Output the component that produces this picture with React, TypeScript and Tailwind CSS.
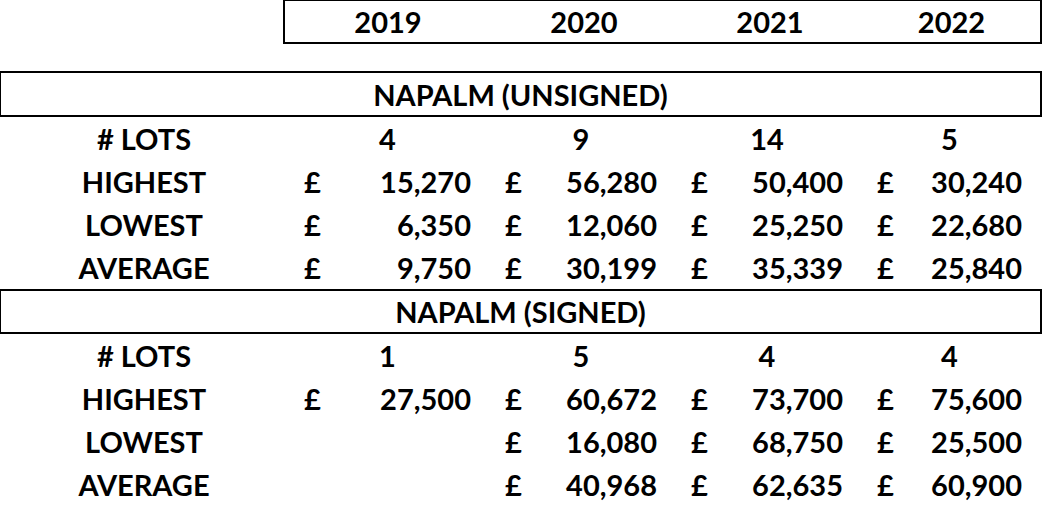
type Row = {
  label: string;
  values: (string | null)[];
  money: boolean;
};

const cols = 'grid grid-cols-[288px_201px_186px_186px_179px]';

const unsigned: Row[] = [
  { label: '# LOTS', values: ['4', '9', '14', '5'], money: false },
  { label: 'HIGHEST', values: ['15,270', '56,280', '50,400', '30,240'], money: true },
  { label: 'LOWEST', values: ['6,350', '12,060', '25,250', '22,680'], money: true },
  { label: 'AVERAGE', values: ['9,750', '30,199', '35,339', '25,840'], money: true },
];

const signed: Row[] = [
  { label: '# LOTS', values: ['1', '5', '4', '4'], money: false },
  { label: 'HIGHEST', values: ['27,500', '60,672', '73,700', '75,600'], money: true },
  { label: 'LOWEST', values: [null, '16,080', '68,750', '25,500'], money: true },
  { label: 'AVERAGE', values: [null, '40,968', '62,635', '60,900'], money: true },
];

function DataRow({ row }: { row: Row }) {
  return (
    <div className={`${cols} h-[43px] items-center`}>
      <div className="text-center">{row.label}</div>
      {row.values.map((v, i) => (
        <div key={i} className="flex justify-between pl-[16px] pr-[18px]">
          {row.money ? (
            v && (
              <>
                <span>£</span>
                <span>{v}</span>
              </>
            )
          ) : (
            <span className="w-full pr-0 text-center">{v}</span>
          )}
        </div>
      ))}
    </div>
  );
}

function Section({ title, rows, boxH }: { title: string; rows: Row[]; boxH: string }) {
  return (
    <>
      <div
        className={`flex w-[1042px] items-center justify-center border-y-2 border-r-2 border-l border-black ${boxH}`}
      >
        {title}
      </div>
      {rows.map((r) => (
        <DataRow key={r.label} row={r} />
      ))}
    </>
  );
}

export default function App() {
  return (
    <div className="h-[507px] w-[1044px] overflow-hidden bg-white font-['Lato',sans-serif] text-[29px] font-bold leading-none text-black">
      {/* Year header */}
      <div className="flex">
        <div className="w-[283px]" />
        <div className="grid h-[44px] w-[759px] grid-cols-[206px_186px_186px_1fr] items-center border-x-2 border-t border-b-2 border-black">
          {['2019', '2020', '2021', '2022'].map((y) => (
            <div key={y} className="text-center">
              {y}
            </div>
          ))}
        </div>
      </div>
      <div className="h-[27px]" />

      <Section title="NAPALM (UNSIGNED)" rows={unsigned} boxH="h-[46px]" />
      <Section title="NAPALM (SIGNED)" rows={signed} boxH="h-[45px]" />
    </div>
  );
}
